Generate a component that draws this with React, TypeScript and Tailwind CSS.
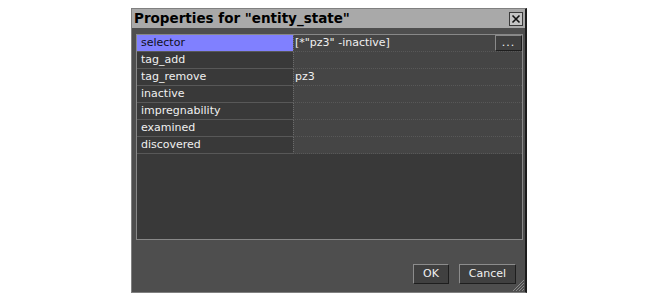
import React from "react";

const rows: { name: string; value: string; selected?: boolean; button?: boolean }[] = [
  { name: "selector", value: '[*"pz3" -inactive]', selected: true, button: true },
  { name: "tag_add", value: "" },
  { name: "tag_remove", value: "pz3" },
  { name: "inactive", value: "" },
  { name: "impregnability", value: "" },
  { name: "examined", value: "" },
  { name: "discovered", value: "" },
];

const font = { fontFamily: '"DejaVu Sans", Verdana, sans-serif' };

export default function App() {
  return (
    <div className="w-[650px] h-[300px] bg-white overflow-hidden" style={font}>
      <div className="ml-[131px] mt-[8px] w-[396px] h-[285px] flex flex-col border-t border-l border-b border-[#808080] border-r-[2px] border-r-[#1c1c1c] bg-[#4e4e4e] relative">
        {/* title bar */}
        <div className="h-[19px] bg-[#a9a9a9] flex items-center pl-[2px] pr-[2px] shrink-0">
          <span className="text-[13.5px] font-bold text-black leading-none flex-1 whitespace-nowrap">
            Properties for "entity_state"
          </span>
          <div className="w-[14px] h-[14px] mt-[1px] bg-[#c4c4c4] border border-[#3a3a3a] flex items-center justify-center">
            <svg width="10" height="10" viewBox="0 0 10 10">
              <path d="M1.5 1.5 L8.5 8.5 M8.5 1.5 L1.5 8.5" stroke="#111" strokeWidth="1.6" />
            </svg>
          </div>
        </div>
        {/* body */}
        <div className="flex-1 flex flex-col pl-[4px] pr-[2px] pt-[6px]">
          <div className="h-[206px] border border-[#888888] bg-[#393939] flex flex-col">
            {rows.map((r) => (
              <div key={r.name} className="h-[17px] flex shrink-0">
                <div
                  className={`w-[156px] h-[17px] border-b border-[#585858] pl-[4px] text-[11px] leading-[16px] whitespace-nowrap ${
                    r.selected ? "bg-[#8080ff] text-[#101020]" : "bg-[#393939] text-[#f0f0f0]"
                  }`}
                >
                  {r.name}
                </div>
                <div className="flex-1 h-[17px] border-l border-dotted border-l-[#6a6a6a] border-b border-b-[#585858] bg-[#454545] flex">
                  <div className="flex-1 pl-[1px] text-[11px] leading-[16px] text-[#f0f0f0] whitespace-nowrap">
                    {r.value}
                  </div>
                  {r.button && (
                    <div className="w-[27px] h-[16px] bg-[#3f3f3f] border-t border-l border-[#8a8a8a] border-r border-b border-r-[#1e1e1e] border-b-[#1e1e1e] text-[11px] leading-[14px] text-[#f0f0f0] text-center tracking-[1px]">
                      ...
                    </div>
                  )}
                </div>
              </div>
            ))}
          </div>
          <div className="flex justify-end gap-[10px] mt-[24px] pr-[7px]">
            <div className="w-[36px] h-[20px] bg-[#404040] border-t border-l border-[#8c8c8c] border-r border-b border-r-[#1e1e1e] border-b-[#1e1e1e] text-[11px] leading-[18px] text-[#f0f0f0] text-center">
              OK
            </div>
            <div className="w-[57px] h-[20px] bg-[#404040] border-t border-l border-[#8c8c8c] border-r border-b border-r-[#1e1e1e] border-b-[#1e1e1e] text-[11px] leading-[18px] text-[#f0f0f0] text-center">
              Cancel
            </div>
          </div>
        </div>
        <svg className="absolute right-0 bottom-0" width="14" height="14" viewBox="0 0 14 14">
          <path d="M13 2 L2 13 M13 5 L5 13 M13 8 L8 13 M13 11 L11 13" stroke="#8a8a8a" strokeWidth="1" />
        </svg>
      </div>
    </div>
  );
}
